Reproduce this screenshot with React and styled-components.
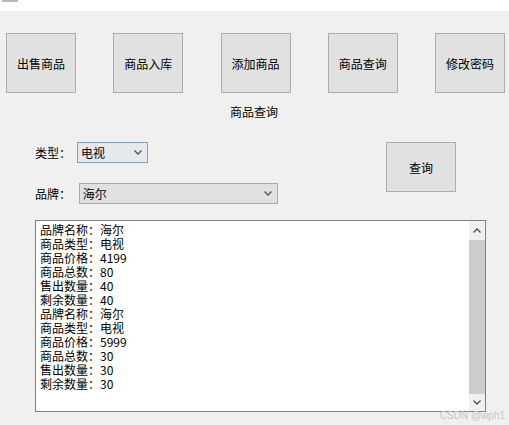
import React from 'react'
import styled, { createGlobalStyle } from 'styled-components'

const GlobalStyle = createGlobalStyle`
  html, body {
    margin: 0;
    padding: 0;
    background: #f0f0f0;
  }
  body {
    font-family: "Noto Sans CJK SC", "Liberation Sans", sans-serif;
    font-size: 12px;
    color: #000;
  }
`

const Window = styled.div`
  position: relative;
  width: 509px;
  height: 425px;
  overflow: hidden;
  background: #f0f0f0;
`

const TitleBar = styled.div`
  height: 11px;
  background: #fff;
  position: relative;
`

const TitleIcon = styled.div`
  position: absolute;
  left: 2px;
  top: 0;
  width: 16px;
  height: 2px;
  background: #b9b9b9;
`

const NavRow = styled.div`
  display: flex;
  justify-content: space-between;
  padding: 0 4px 0 6px;
  margin-top: 22px;
`

const Button = styled.button`
  box-sizing: border-box;
  width: ${p => p.$w || 70}px;
  height: ${p => p.$h || 60}px;
  background: #e1e1e1;
  border: 1px solid #adadad;
  border-radius: 0;
  padding: 0;
  font-family: inherit;
  font-size: 12px;
  color: #000;
`

const Heading = styled.div`
  text-align: center;
  margin-top: 12px;
  line-height: 14px;
  padding-right: 1px;
`

const FormArea = styled.div`
  display: flex;
  align-items: flex-start;
  padding-left: 35px;
  margin-top: 23px;
`

const Fields = styled.div`
  display: flex;
  flex-direction: column;
  gap: 20px;
  width: 243px;
`

const Field = styled.div`
  display: flex;
  align-items: center;
`

const Label = styled.span`
  width: ${p => p.$w}px;
  line-height: 14px;
`

const Select = styled.div`
  box-sizing: border-box;
  display: flex;
  align-items: center;
  justify-content: space-between;
  width: ${p => p.$w}px;
  height: 21px;
  padding: 0 5px 0 3px;
  background: ${p => (p.$focus ? '#e5e9ee' : '#e1e1e1')};
  border: 1px solid ${p => (p.$focus ? '#7aa0c4' : '#9eaab6')};
  line-height: 14px;
`

const QueryButton = styled(Button)`
  margin-left: 108px;
`

const Output = styled.div`
  box-sizing: border-box;
  display: grid;
  grid-template-columns: 1fr 16px;
  margin: 16px 0 0 35px;
  width: 451px;
  height: 192px;
  background: #fff;
  border: 1px solid #7f7f7f;
`

const Lines = styled.div`
  padding: 2px 0 0 4px;
  line-height: 14px;
  white-space: pre;
`

const Scrollbar = styled.div`
  display: grid;
  grid-template-rows: 19px 1fr 17px;
  background: #f0f0f0;
`

const Arrow = styled.div`
  display: flex;
  align-items: center;
  justify-content: center;
`

const Thumb = styled.div`
  background: #cdcdcd;
`

const Watermark = styled.div`
  position: absolute;
  right: 4px;
  bottom: 4px;
  font-family: "Liberation Sans", sans-serif;
  font-size: 10px;
  color: #c6c6c6;
`

const Chevron = ({ up }) => (
  <svg width="8" height="5" viewBox="0 0 8 5">
    <path
      d={up ? 'M0.5 4.5 L4 1 L7.5 4.5' : 'M0.5 0.5 L4 4 L7.5 0.5'}
      fill="none"
      stroke="#505050"
      strokeWidth="1.3"
    />
  </svg>
)

const records = [
  { brand: '海尔', type: '电视', price: 4199, total: 80, sold: 40, left: 40 },
  { brand: '海尔', type: '电视', price: 5999, total: 30, sold: 30, left: 30 },
]

const navItems = ['出售商品', '商品入库', '添加商品', '商品查询', '修改密码']

const App = () => (
  <Window>
    <GlobalStyle />
    <TitleBar>
      <TitleIcon />
    </TitleBar>
    <NavRow>
      {navItems.map(n => (
        <Button key={n}>{n}</Button>
      ))}
    </NavRow>
    <Heading>商品查询</Heading>
    <FormArea>
      <Fields>
        <Field>
          <Label $w={42}>类型：</Label>
          <Select $w={71} $focus>
            <span>电视</span>
            <Chevron />
          </Select>
        </Field>
        <Field>
          <Label $w={44}>品牌：</Label>
          <Select $w={200}>
            <span>海尔</span>
            <Chevron />
          </Select>
        </Field>
      </Fields>
      <QueryButton $h={50}>查询</QueryButton>
    </FormArea>
    <Output>
      <Lines>
        {records.map(r =>
          [
            `品牌名称：${r.brand}`,
            `商品类型：${r.type}`,
            `商品价格：${r.price}`,
            `商品总数：${r.total}`,
            `售出数量：${r.sold}`,
            `剩余数量：${r.left}`,
          ].join('\n')
        ).join('\n')}
      </Lines>
      <Scrollbar>
        <Arrow><Chevron up /></Arrow>
        <Thumb />
        <Arrow><Chevron /></Arrow>
      </Scrollbar>
    </Output>
    <Watermark>CSDN @wph1</Watermark>
  </Window>
)

export default App
